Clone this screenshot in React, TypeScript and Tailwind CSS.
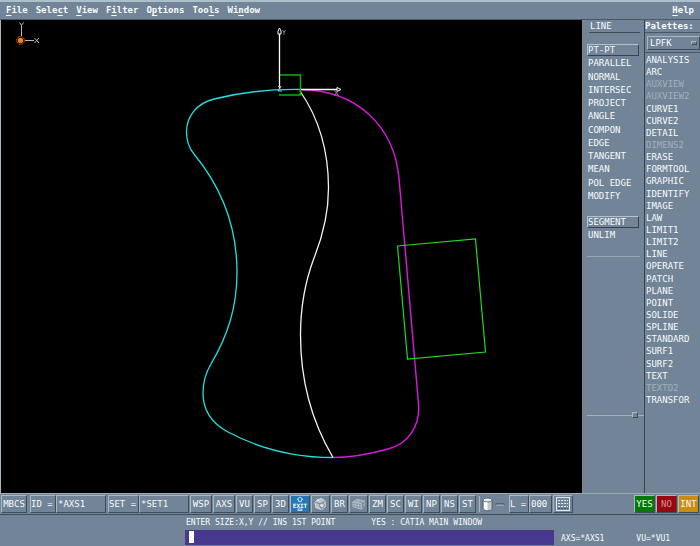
import { useState, type ReactNode } from "react";
import clsx from "clsx";

const menus = [
  { label: "File", key: 0 },
  { label: "Select", key: 4 },
  { label: "View", key: 0 },
  { label: "Filter", key: 1 },
  { label: "Options", key: 1 },
  { label: "Tools", key: 3 },
  { label: "Window", key: 2 },
];

const lineModes = [
  "PT-PT", "PARALLEL", "NORMAL", "INTERSEC", "PROJECT", "ANGLE",
  "COMPON", "EDGE", "TANGENT", "MEAN", "POL EDGE", "MODIFY",
];

const limitModes = ["SEGMENT", "UNLIM"];

const palette = [
  "ANALYSIS", "ARC", "AUXVIEW", "AUXVIEW2", "CURVE1", "CURVE2", "DETAIL",
  "DIMENS2", "ERASE", "FORMTOOL", "GRAPHIC", "IDENTIFY", "IMAGE", "LAW",
  "LIMIT1", "LIMIT2", "LINE", "OPERATE", "PATCH", "PLANE", "POINT", "SOLIDE",
  "SPLINE", "STANDARD", "SURF1", "SURF2", "TEXT", "TEXTD2", "TRANSFOR",
];

const disabled = ["AUXVIEW", "AUXVIEW2", "DIMENS2", "TEXTD2"];

const raised =
  "border border-t-[#a9b9c4] border-l-[#a9b9c4] border-r-[#3f4d5b] border-b-[#3f4d5b]";

function MenuItem({ label, index }: { label: string; index: number }) {
  return (
    <button type="button" className="leading-3 font-bold">
      {label.slice(0, index)}
      <span className="underline underline-offset-2">{label[index]}</span>
      {label.slice(index + 1)}
    </button>
  );
}

function ToolButton({
  children,
  label,
  className = "w-[17px]",
}: {
  children: ReactNode;
  label?: string;
  className?: string;
}) {
  return (
    <button
      type="button"
      aria-label={label}
      className={clsx(
        raised,
        "flex h-[18px] shrink-0 items-center justify-center",
        className
      )}
    >
      {children}
    </button>
  );
}

function Field({
  id,
  label,
  value,
  labelWidth,
  inputWidth,
}: {
  id: string;
  label: string;
  value: string;
  labelWidth: string;
  inputWidth: string;
}) {
  return (
    <div className="flex h-[18px] shrink-0">
      <label
        htmlFor={id}
        className={clsx(raised, labelWidth, "leading-4 whitespace-pre")}
      >
        {label}
      </label>
      <input
        id={id}
        defaultValue={value}
        className={clsx(raised, inputWidth, "bg-transparent pl-px leading-4 outline-none")}
      />
    </div>
  );
}

function ModeList({
  items,
  active,
  onPick,
  className,
}: {
  items: string[];
  active: string;
  onPick: (item: string) => void;
  className: string;
}) {
  return (
    <ul className={clsx("flex flex-col justify-between", className)}>
      {items.map((item) => (
        <li key={item} className="flex">
          <button
            type="button"
            onClick={() => onPick(item)}
            className={clsx(
              "h-3 w-[52px] border text-left leading-[10px] whitespace-nowrap",
              item === active
                ? "border-t-[#b4c2cc] border-l-[#b4c2cc] border-r-[#34414e] border-b-[#34414e]"
                : "border-transparent"
            )}
          >
            {item}
          </button>
        </li>
      ))}
    </ul>
  );
}

function Drawing() {
  return (
    <svg
      viewBox="1 20 581 473"
      className="block h-full w-full"
      fill="none"
      role="img"
      aria-label="Part outline"
    >
      {/* view orientation marker */}
      <g stroke="#b9b9b9" strokeWidth="1">
        <path d="M21.5 36V27.5M19.5 22.5l2 3 2-3M21.5 25.5v3" />
        <path d="M25 40.5h9M34.5 38l4.500 5M39 38l-4.500 5" />
      </g>
      <circle cx="20.500" cy="40.500" r="3.900" stroke="#d96a12" strokeWidth="1" strokeDasharray="2 1" />
      <circle cx="20.500" cy="40.500" r="2.700" fill="#f07d1c" />

      {/* profile curves */}
      <path
        d="M301 89.500C272 89 240 92.500 214 99C196 103.500 186.500 117 186.500 132C186.500 141 189 148 194 154C222 188 237 228 237 272C237 307 228 335 211 364C205 374 203 383 203 393C203 411 213 424 228 432C260 449 296 457.500 333 457.500"
        stroke="#20e0e0"
        strokeWidth="1.300"
      />
      <path
        d="M300 89.500C357 90 394 126 399 178L418.500 404C420.500 426 408 444 388 449C370 454 351 457.500 333 457.500"
        stroke="#dc18dc"
        strokeWidth="1.400"
      />
      <path
        d="M300 91C318 117 328.500 151 328.500 188C328.500 216 322 238 314 258C305 282 300.500 306 300.500 335C300.500 380 312 422 333 457.500"
        stroke="#f4f4f4"
        strokeWidth="1.300"
      />

      <path d="M397.500 246L475.500 239L485.500 352L407.500 359Z" stroke="#22d822" strokeWidth="1.200" />
      <path d="M279 75H300.500V95H279" stroke="#10b010" strokeWidth="1.500" />

      {/* axis system */}
      <g stroke="#fff">
        <path d="M279.500 89V34M301 89.500h36" strokeWidth="1.300" />
        <path d="M279.500 28l-1.500 3v3h3v-3ZM341 89.500l-4-2v4Z" />
        <path d="M282.500 30l1.500 2.500 1.500-2.500M284 32.500V35" stroke="#aaa" strokeWidth="0.800" />
        <path d="M334.500 90.500l4 5M338.500 90.500l-4 5" stroke="#aaa" strokeWidth="0.800" />
        <path d="M278 86.500h3l-3 4.500h4" stroke="#9bd" />
      </g>
    </svg>
  );
}

function ExitIcon() {
  return (
    <svg viewBox="0 0 18 16" className="h-4 w-[18px]" fill="none" stroke="#d9efff" strokeWidth="0.800">
      <path d="M9 1L6 3.500H7.500V5.500H10.500V3.500H12Z" />
      <rect x="7" y="13" width="4" height="1.500" />
      <text x="9" y="11.500" textAnchor="middle" fontSize="6" fontWeight="bold" fill="#fff" stroke="none">
        EXIT
      </text>
    </svg>
  );
}

function CameraIcon() {
  return (
    <svg viewBox="0 0 18 16" className="h-4 w-[18px]" strokeWidth="0.700">
      <path d="M3 6L6 3.500L10 2L14 5V11L10 14L4 12Z" fill="#b8c2c9" stroke="#e8eef2" />
      <path d="M3 6L9 8L14 5M9 8L10 14" fill="none" stroke="#5a6976" />
      <circle cx="10.500" cy="9.500" r="2.500" fill="#d7dee2" stroke="#566370" />
      <path d="M5 3L8 5" stroke="#fff" />
    </svg>
  );
}

function BoxIcon() {
  return (
    <svg viewBox="0 0 18 16" className="h-4 w-[18px]" stroke="#c3ced6" strokeWidth="0.700">
      <path d="M3 6L7 3L15 4.500L12 7.500Z" fill="#8e9eab" />
      <path d="M3 6V11L12 13.500V7.500Z" fill="#8191a0" />
      <path d="M12 7.500L15 4.500V10.500L12 13.500Z" fill="#687987" />
      <path d="M3 8.500L12 10.500L15 7.500M6 6.500V12M9 7V12.500M7 5.500l4-1.500" fill="none" />
    </svg>
  );
}

function DiskIcon() {
  return (
    <svg viewBox="0 0 26 16" className="h-4 w-[26px]">
      <path d="M3 4V12.500C3 15.500 12 15.500 12 12.500V4Z" fill="#c3c8c9" stroke="#4c5863" strokeWidth="0.800" />
      <path d="M4 5V12.500C5 13.500 6.500 14 7.500 14V5Z" fill="#fff" />
      <ellipse cx="7.500" cy="4" rx="4.500" ry="1.900" fill="#e9eded" stroke="#4c5863" strokeWidth="0.800" />
      <path d="M16 7.500h8v2h-8Z" fill="none" stroke="#4c5a68" strokeWidth="0.800" />
      <path d="M16 9.500h8" stroke="#a9b9c4" strokeWidth="0.800" />
    </svg>
  );
}

function KeypadIcon() {
  return (
    <svg viewBox="0 0 18 16" className="h-4 w-[18px]" fill="none" stroke="#e2eaee">
      <rect x="2.500" y="1.500" width="13" height="13" />
      <path d="M4 4.500h10M4 7.500h10M4 10.500h10" strokeDasharray="2 1" />
      <path d="M4 12.500h10" strokeDasharray="2 1" stroke="#4c5a68" />
    </svg>
  );
}

export default function App() {
  const [mode, setMode] = useState("PT-PT");
  const [limit, setLimit] = useState("SEGMENT");

  return (
    <div className="flex min-h-screen flex-col bg-[#728497] font-['DejaVu_Sans_Mono',monospace] text-[9px] leading-3 text-[#f8fbfd]">
      <nav className="flex h-5 shrink-0 items-start justify-between border-t-2 border-b border-t-[#abc0ca] border-b-[#4a5866] px-1.5 pt-0.5">
        <div className="flex gap-2">
          {menus.map((menu) => (
            <MenuItem key={menu.label} label={menu.label} index={menu.key} />
          ))}
        </div>
        <MenuItem label="Help" index={0} />
      </nav>

      <main className="flex grow">
        <div className="min-w-0 grow basis-0 border-l border-[#a5b4bf] bg-black">
          <Drawing />
        </div>

        {/* current function options */}
        <section className="flex w-[62px] shrink-0 flex-col border-l border-[#8b8784] pl-1">
          <h2 className="mr-1 ml-0.5 border-b border-[#3f4d5b] pl-px leading-3">LINE</h2>
          <ModeList items={lineModes} active={mode} onPick={setMode} className="mt-[11px] h-[158px]" />
          <ModeList items={limitModes} active={limit} onPick={setLimit} className="mt-[14px] h-[25px]" />
          <hr className="mt-[15px] mr-1 border-t-[#97a6b3]" />
          <div className="mt-[155px] flex items-center">
            <div className="h-px grow bg-[#a3b1bc]" />
            <div className={clsx(raised, "size-1.5")} />
            <div className="h-px w-1.5 bg-[#a3b1bc]" />
          </div>
        </section>

        <section className="flex w-14 shrink-0 flex-col border-l border-[#36424e]">
          <label htmlFor="palette" className="border-b border-[#4a5866] leading-3 font-bold">
            Palettes:
          </label>
          <div className="mt-[3px] border-b border-[#4a5866] pb-0.5 pl-0.5">
            <div className={clsx(raised, "flex items-center pr-0.5")}>
              <select id="palette" className="min-w-0 grow appearance-none bg-transparent pl-0.5 leading-3 outline-none">
                <option>LPFK</option>
              </select>
              <span className={clsx(raised, "h-1 w-1.5")} />
            </div>
          </div>
          <ul className="mt-px flex h-[352px] flex-col justify-between pl-px">
            {palette.map((item) => (
              <li key={item} className="flex">
                <button
                  type="button"
                  disabled={disabled.includes(item)}
                  className="leading-3 disabled:text-[#a3b0bb]"
                >
                  {item}
                </button>
              </li>
            ))}
          </ul>
        </section>
      </main>

      <div className="flex h-[22px] shrink-0 items-center gap-px border-t border-b border-t-[#9aaab6] border-b-[#3f4d5b] px-px">
        <ToolButton className="w-[26px]">MBCS</ToolButton>
        <div className="ml-0.5 flex gap-0.5">
          <Field id="ident" label="ID =" value="*AXS1" labelWidth="w-[26px]" inputWidth="w-[50px]" />
          <Field id="set" label="SET =" value="*SET1" labelWidth="w-[31px]" inputWidth="w-[50px]" />
        </div>
        <ToolButton className="w-[22px]">WSP</ToolButton>
        <ToolButton className="w-[22px]">AXS</ToolButton>
        <ToolButton>VU</ToolButton>
        <ToolButton>SP</ToolButton>
        <ToolButton>3D</ToolButton>
        <ToolButton label="Exit" className="w-5 bg-[#2478b8]">
          <ExitIcon />
        </ToolButton>
        <ToolButton label="Image" className="w-[19px]">
          <CameraIcon />
        </ToolButton>
        <ToolButton>BR</ToolButton>
        <ToolButton label="Solid" className="w-[19px]">
          <BoxIcon />
        </ToolButton>
        <ToolButton>ZM</ToolButton>
        <ToolButton>SC</ToolButton>
        <ToolButton>WI</ToolButton>
        <ToolButton>NP</ToolButton>
        <ToolButton>NS</ToolButton>
        <ToolButton>ST</ToolButton>
        <button type="button" aria-label="Storage" className="mx-0.5 shrink-0 border-l border-[#a9b9c4]">
          <DiskIcon />
        </button>
        <Field id="layer" label="L =" value="000" labelWidth="w-5" inputWidth="w-[23px]" />
        <ToolButton label="Keypad" className="w-5">
          <KeypadIcon />
        </ToolButton>
        <div className="ml-auto flex gap-px">
          <ToolButton className="w-[21px] bg-[#067806]">YES</ToolButton>
          <ToolButton className="w-[21px] bg-[#980810] text-[#d88c8c]">NO</ToolButton>
          <ToolButton className="w-[21px] bg-[#c88c10]">INT</ToolButton>
        </div>
      </div>

      <footer className="flex h-8 shrink-0 items-end pb-0.5 text-[8px]">
        <div className="ml-[185px] grow">
          <div className="flex gap-9 pb-px pl-px leading-3 whitespace-nowrap">
            <label htmlFor="command">ENTER SIZE:X,Y // INS 1ST POINT</label>
            <span>YES : CATIA MAIN WINDOW</span>
          </div>
          <div className="flex h-[15px] items-start bg-[#483890] pt-px pl-1">
            <span className="h-3 w-[5px] bg-white" />
            <input id="command" className="min-w-0 grow bg-transparent outline-none" />
          </div>
        </div>
        <div className="flex w-[146px] shrink-0 gap-8 pl-[7px] leading-3">
          <span>AXS=*AXS1</span>
          <span>VU=*VU1</span>
        </div>
      </footer>
    </div>
  );
}
